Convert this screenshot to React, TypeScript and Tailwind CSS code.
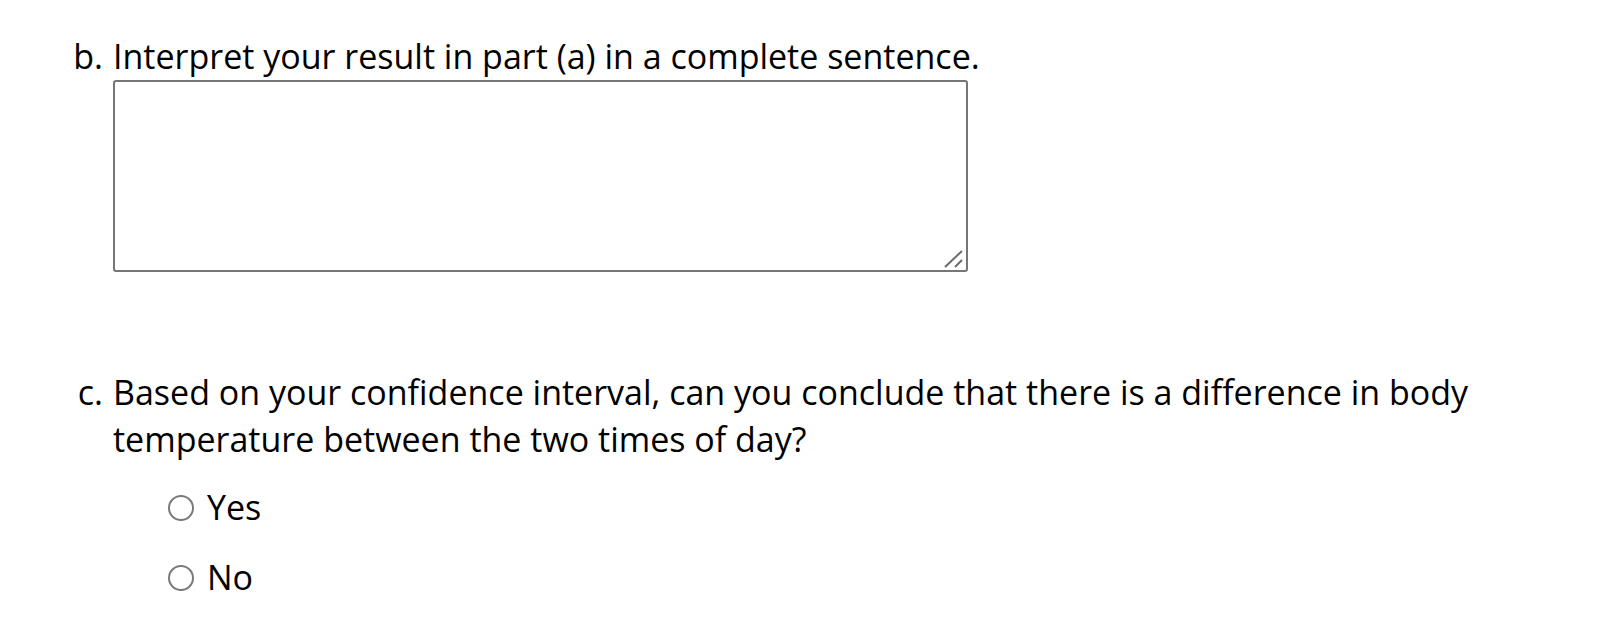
import React from "react";

function Radio({ label }: { label: string }) {
  return (
    <label className="flex items-center h-[47px]">
      <span className="w-[26px] h-[26px] rounded-full border-2 border-[#7a7a7a] bg-white shrink-0" />
      <span className="ml-[13px]">{label}</span>
    </label>
  );
}

export default function App() {
  return (
    <div
      className="w-[1622px] h-[630px] bg-white text-black text-[34px] leading-[47px] overflow-hidden"
      style={{ fontFamily: '"Open Sans", "Noto Sans", sans-serif' }}
    >
      <div className="pt-[33px]">
        <div className="flex">
          <div className="w-[113px] text-right pr-[10px] shrink-0">b.</div>
          <div>
            <div>Interpret your result in part (a) in a complete sentence.</div>
            <div className="relative w-[855px] h-[192px]">
              <textarea className="block w-full h-full resize-none border-2 border-[#767676] rounded-[3px] bg-white outline-none" />
              <svg
                className="absolute right-[3px] bottom-[3px] pointer-events-none"
                width="22"
                height="20"
                viewBox="0 0 22 20"
              >
                <line x1="2" y1="18" x2="19" y2="2" stroke="#6b6b6b" strokeWidth="2" />
                <line x1="12" y1="18" x2="19" y2="11" stroke="#6b6b6b" strokeWidth="2" />
              </svg>
            </div>
          </div>
        </div>

        <div className="flex mt-[97px]">
          <div className="w-[113px] text-right pr-[10px] shrink-0">c.</div>
          <div>
            <div>
              Based on your confidence interval, can you conclude that there is a difference in body
              <br />
              temperature between the two times of day?
            </div>
            <div className="mt-[21px] pl-[55px] flex flex-col gap-[23px]">
              <Radio label="Yes" />
              <Radio label="No" />
            </div>
          </div>
        </div>
      </div>
    </div>
  );
}
